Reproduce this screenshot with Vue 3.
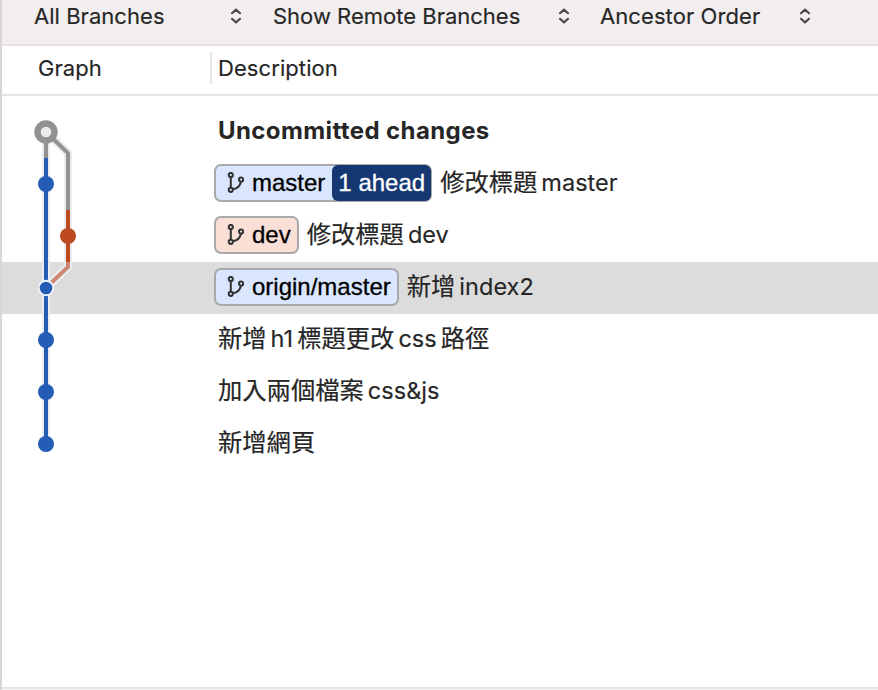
<script setup>
const filters = [
  { label: 'All Branches', kind: 'all' },
  { label: 'Show Remote Branches', kind: 'remote' },
  { label: 'Ancestor Order', kind: 'order' },
]

const commits = [
  { id: 0, bold: true, parts: ['Uncommitted changes'] },
  { id: 1, tag: 'master', ahead: '1 ahead', parts: ['修改標題', 'master'] },
  { id: 2, tag: 'dev', tone: 'red', parts: ['修改標題', 'dev'] },
  { id: 3, tag: 'origin/master', selected: true, parts: ['新增', 'index2'] },
  { id: 4, parts: ['新增', 'h1', '標題更改', 'css', '路徑'] },
  { id: 5, parts: ['加入兩個檔案', 'css&js'] },
  { id: 6, parts: ['新增網頁'] },
]

const isLatin = (s) => /^[\x00-\x7f]+$/.test(s)
</script>

<template>
  <div class="window">
    <header class="toolbar">
      <div v-for="f in filters" :key="f.kind" class="filter" :class="f.kind">
        <span>{{ f.label }}</span>
        <svg class="chevrons" width="12" height="18" viewBox="0 0 12 18">
          <path d="M2 6.2 6 2.6 10 6.2M2 11.8 6 15.4 10 11.8" />
        </svg>
      </div>
    </header>
    <div class="columns">
      <div class="col-graph">Graph</div>
      <div class="col-desc"><span>Description</span></div>
    </div>
    <main class="log">
      <div v-for="c in commits" :key="c.id" class="row" :class="{ selected: c.selected }">
        <div v-if="c.tag" class="tag" :class="[c.tone, { split: c.ahead }]">
          <svg class="branch" width="18" height="22" viewBox="0 0 18 22">
            <circle cx="4.8" cy="3" r="2.1" />
            <circle cx="4.8" cy="17.8" r="2.1" />
            <circle cx="15.1" cy="7.6" r="2.1" />
            <path d="M4.8 5.1V15.7M14.9 9.7C14.2 13.6 11.2 16.4 6.9 17.3" />
          </svg>
          <span class="name">{{ c.tag }}</span>
          <span v-if="c.ahead" class="ahead">{{ c.ahead }}</span>
        </div>
        <div class="message" :class="{ bold: c.bold, tagged: c.tag }">
          <span v-for="(p, i) in c.parts" :key="i" :class="isLatin(p) ? 'latin' : 'cjk'">{{ p }}</span>
        </div>
      </div>
      <svg class="graph" width="100" height="364" viewBox="0 106 100 364">
        <path class="halo" d="M46 132V444M46 132 68 153V267L46 288" />
        <path class="line gray" d="M46 132V158M46 132 68 153V210" />
        <path class="line blue" d="M46 158V444" />
        <path class="line red" d="M68 210V262" />
        <path class="line faded" d="M68 262V267L48 286" />
        <circle class="head" cx="46" cy="132" r="8.5" />
        <circle v-for="y in [184, 340, 392, 444]" :key="y" class="node" cx="46" :cy="y" r="8" />
        <circle class="node dev" cx="68" cy="236" r="8" />
        <circle class="node current" cx="46" cy="288" r="7.3" />
      </svg>
    </main>
    <footer class="bottom"></footer>
  </div>
</template>

<style>
body {
  background: #fff;
}
</style>

<style scoped>
.window {
  box-sizing: border-box;
  width: 878px;
  height: 690px;
  border-left: 2px solid #dbd5d9;
  display: flex;
  flex-direction: column;
  overflow: hidden;
  background: #fff;
  color: #262626;
  font-family: Inter, "Noto Sans CJK TC", sans-serif;
  font-size: 22px;
  letter-spacing: 0.04px;
  white-space: nowrap;
  -webkit-text-stroke: 0.15px currentColor;
}
.toolbar {
  box-sizing: border-box;
  height: 46px;
  flex: none;
  border-bottom: 2px solid #e4e2e3;
  background: #f2eeef;
  display: flex;
  padding-left: 32px;
}
.filter {
  height: 32px;
  display: flex;
  align-items: center;
  justify-content: space-between;
}
.all { width: 208px; margin-right: 31px; }
.remote { width: 297px; margin-right: 30px; letter-spacing: 0; }
.order { width: 211px; letter-spacing: 0.08px; }
.chevrons path {
  fill: none;
  stroke: #4c4a4b;
  stroke-width: 2.2;
  stroke-linecap: round;
  stroke-linejoin: round;
}
.columns {
  box-sizing: border-box;
  height: 50px;
  flex: none;
  border-bottom: 2px solid #e5e5e5;
  display: flex;
  align-items: center;
}
.col-graph {
  width: 172px;
  padding-left: 36px;
  line-height: 44px;
  padding-bottom: 4px;
}
.col-desc {
  height: 32px;
  line-height: 32px;
  border-left: 2px solid #e5e5e5;
  padding-left: 6px;
  margin-bottom: 4px;
  letter-spacing: 0.08px;
}
.log {
  position: relative;
  padding-top: 10px;
}
.row {
  height: 52px;
  display: flex;
  align-items: center;
  padding-left: 212px;
}
.row.selected { background: #dcdcdc; }
.tag {
  box-sizing: border-box;
  height: 38px;
  margin-bottom: 2px;
  border: 2px solid #a9a9ab;
  border-radius: 7px;
  background: #d9e6fd;
  display: flex;
  align-items: center;
  padding: 0 6px 0 10px;
  color: #000;
  font-family: "Liberation Sans", Arial, sans-serif;
  font-size: 24px;
  letter-spacing: 0;
  -webkit-text-stroke: 0.3px currentColor;
}
.tag.red { background: #fadfd7; }
.tag.split { padding-right: 0; }
.name { margin-left: 8px; }
.ahead {
  height: 36px;
  line-height: 36px;
  margin: -1px -1px -1px 7px;
  padding: 0 6px 0 6px;
  border-radius: 6px;
  background: #153872;
  color: #fff;
}
.branch {
  fill: none;
  stroke: #333;
  stroke-width: 2;
}
.message {
  display: flex;
  align-items: center;
  gap: 4px;
  margin-left: 4px;
  height: 32px;
  line-height: 32px;
  padding-bottom: 2px;
  font-size: 23.5px;
}
.message.tagged { margin-left: 8px; }
.message.bold {
  font-size: 24px;
  font-weight: 700;
  letter-spacing: 0.4px;
  -webkit-text-stroke: 0;
}
.cjk {
  margin-top: -5px;
  font-size: 24.3px;
  font-family: "Noto Sans CJK TC", sans-serif;
  letter-spacing: 0;
  -webkit-text-stroke: 0.2px currentColor;
}
.graph {
  position: absolute;
  left: -2px;
  top: 10px;
}
.graph path { fill: none; }
.halo { stroke: #eaedf0; stroke-width: 8; }
.line { stroke-width: 4; }
.gray { stroke: #929292; }
.blue { stroke: #255cb5; }
.line.red { stroke: #be481f; }
.faded { stroke: #ce8872; }
.head { fill: #ebebeb; stroke: #929292; stroke-width: 6.4; }
.node { fill: #255cb5; }
.node.dev { fill: #be481f; }
.current { stroke: #edf2fa; stroke-width: 2; }
.bottom {
  margin-top: auto;
  height: 1px;
  flex: none;
  border-top: 2px solid #e5e5e5;
  background: #f5f5f5;
}
</style>
